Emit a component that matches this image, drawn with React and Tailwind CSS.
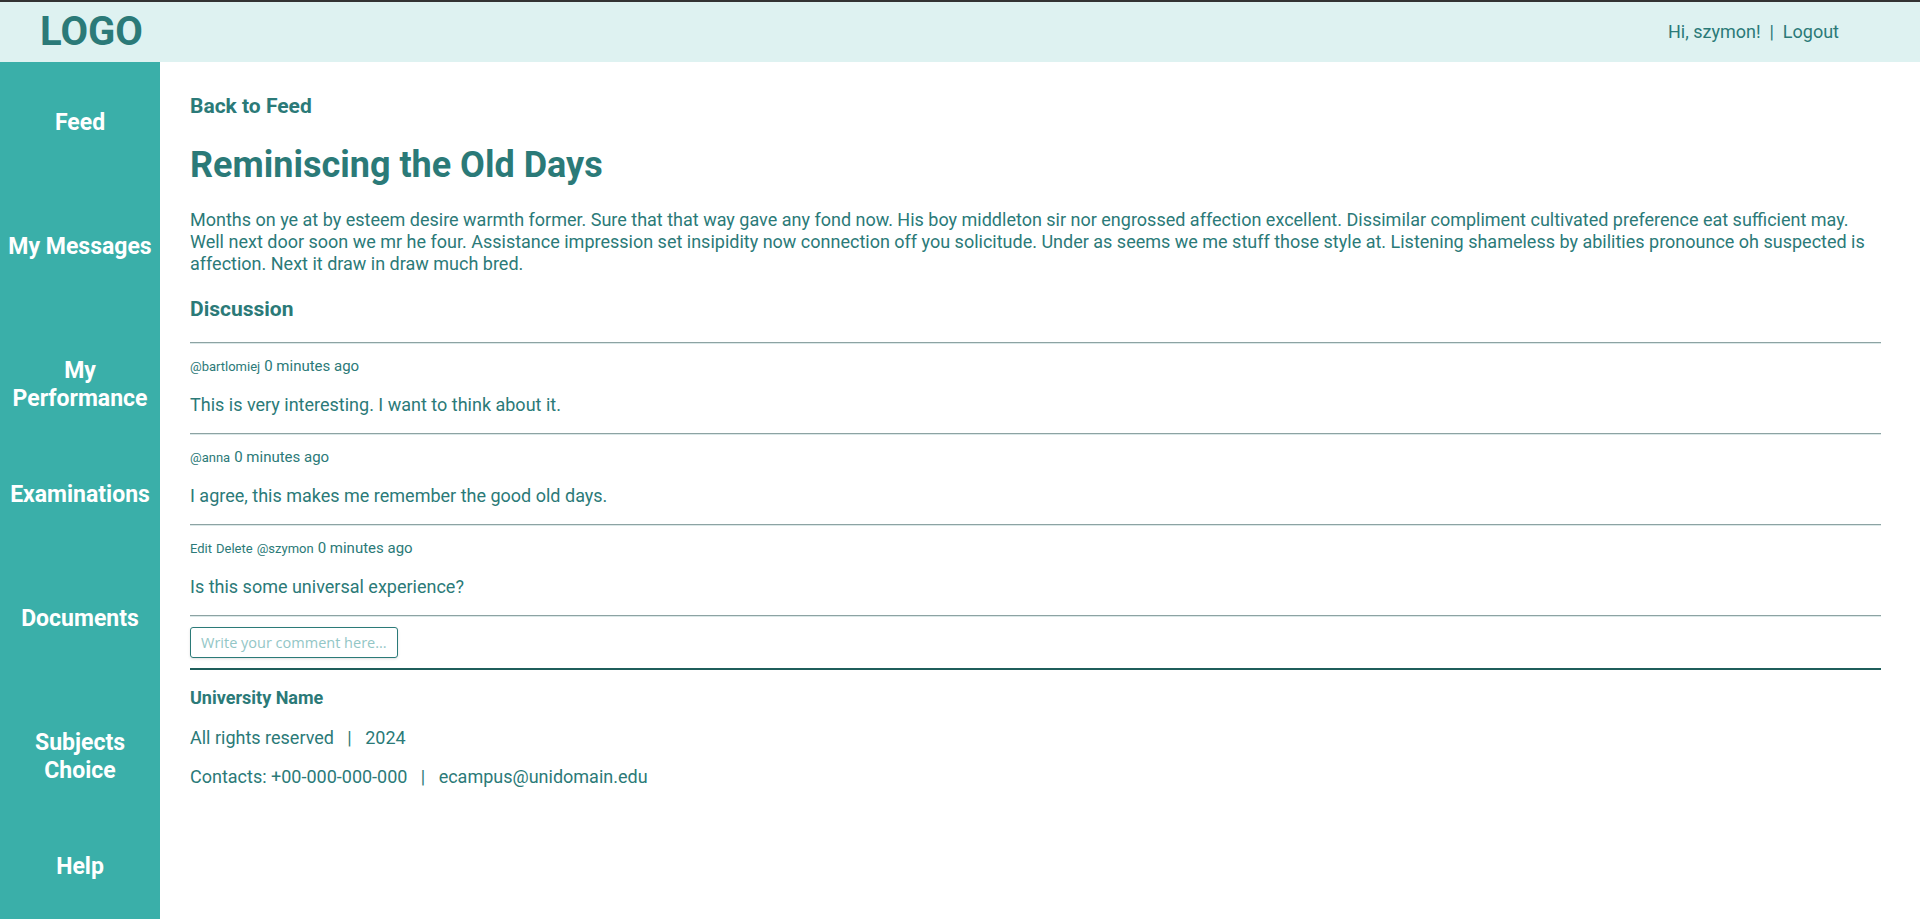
import React from 'react';

const navItems = ['Feed', 'My Messages', 'My Performance', 'Examinations', 'Documents', 'Subjects Choice', 'Help'];

const comments = [
    { author: 'bartlomiej', time: '0 minutes ago', text: 'This is very interesting. I want to think about it.', own: false },
    { author: 'anna', time: '0 minutes ago', text: 'I agree, this makes me remember the good old days.', own: false },
    { author: 'szymon', time: '0 minutes ago', text: 'Is this some universal experience?', own: true }
];

const Divider = () => (
    <div className="h-[2px] border-t border-b border-t-[#8da3a3] border-b-[#dbe8e8]" />
);

const App = () => {
    const [comment, setComment] = React.useState('');

    return (
        <div className="h-screen overflow-hidden flex flex-col font-['Roboto','Liberation_Sans',sans-serif] text-[#2b7a78]">
            <header className="h-[62px] shrink-0 border-t-2 border-[#333333] bg-[#def2f1] flex items-center justify-between pl-10 pr-[81px]">
                <h1 className="text-[40px] leading-none font-bold">LOGO</h1>
                <div className="text-[18px] leading-[20px] whitespace-pre">
                    <span>Hi, szymon!</span>
                    <span>{'  |  '}</span>
                    <a href="#">Logout</a>
                </div>
            </header>

            <div className="flex flex-1 min-h-0">
                <nav className="w-[160px] shrink-0 bg-[#3aafa9] flex flex-col">
                    {navItems.map((item) => (
                        <a
                            key={item}
                            href="#"
                            className="h-[124px] shrink-0 pt-[47px] px-1 text-center text-white text-[23px] leading-[28px] font-bold"
                        >
                            {item}
                        </a>
                    ))}
                </nav>

                <main className="flex-1 pl-[30px] pr-[39px] pt-[32px]">
                    <a href="#" className="block text-[21px] leading-[24px] font-bold">Back to Feed</a>
                    <h2 className="mt-[25px] text-[36px] leading-[44px] font-bold">Reminiscing the Old Days</h2>
                    <p className="mt-[22px] text-[18px] leading-[22px]">
                        Months on ye at by esteem desire warmth former. Sure that that way gave any fond now. His boy middleton sir nor engrossed affection excellent. Dissimilar compliment cultivated preference eat sufficient may. Well next door soon we mr he four. Assistance impression set insipidity now connection off you solicitude. Under as seems we me stuff those style at. Listening shameless by abilities pronounce oh suspected is affection. Next it draw in draw much bred.
                    </p>

                    <h3 className="mt-[22px] text-[21px] leading-[24px] font-bold">Discussion</h3>

                    <div className="mt-[21px]">
                        {comments.map((c) => (
                            <div key={c.author}>
                                <Divider />
                                <div className="mt-[13px] h-[18px] flex items-baseline gap-[4px] leading-[18px]">
                                    {c.own && (
                                        <>
                                            <button className="text-[13px]">Edit</button>
                                            <button className="text-[13px]">Delete</button>
                                        </>
                                    )}
                                    <span className="text-[13px]">@{c.author}</span>
                                    <span className="text-[15px]">{c.time}</span>
                                </div>
                                <p className="mt-[19px] mb-[17px] text-[18px] leading-[22px]">{c.text}</p>
                            </div>
                        ))}
                        <Divider />
                    </div>

                    <input
                        type="text"
                        value={comment}
                        onChange={(e) => setComment(e.target.value)}
                        placeholder="Write your comment here..."
                        className="mt-[10px] block w-[208px] h-[31px] px-[10px] border border-[#2b7a78] rounded-[3px] shadow-sm text-[14.5px] font-['Open_Sans',sans-serif] placeholder:text-[#93c6c6] outline-none"
                    />

                    <div className="mt-[10px] h-[2px] bg-[#1f5e5b]" />

                    <footer>
                        <p className="mt-[18px] text-[18px] leading-[20px] font-bold">University Name</p>
                        <p className="mt-[20px] text-[18px] leading-[20px] whitespace-pre">All rights reserved   |   2024</p>
                        <p className="mt-[19px] text-[18px] leading-[20px] whitespace-pre">Contacts: +00-000-000-000   |   ecampus@unidomain.edu</p>
                    </footer>
                </main>
            </div>
        </div>
    );
};

export default App;
